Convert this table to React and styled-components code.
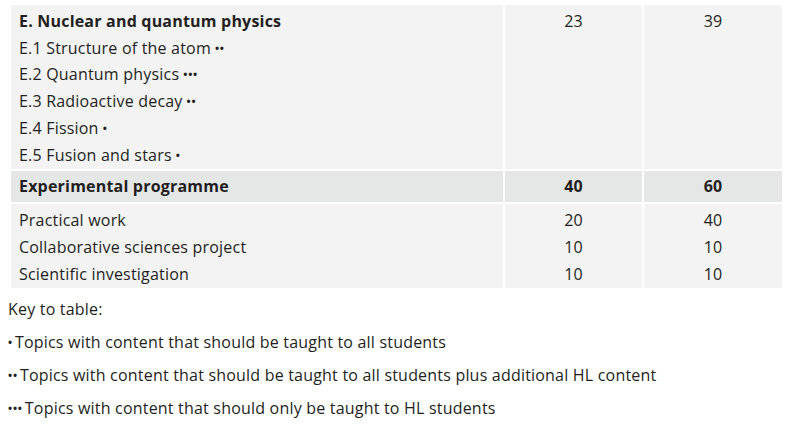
import React from "react";
import styled, { createGlobalStyle } from "styled-components";

const GlobalStyle = createGlobalStyle`
  body {
    margin: 0;
    background: #ffffff;
    color: #231f20;
    font-family: "Open Sans", "Liberation Sans", sans-serif;
    font-size: 16px;
    letter-spacing: 0.2px;
  }
`;

const Page = styled.div`
  padding-top: 5px;
`;

const Table = styled.div`
  margin-left: 11px;
  width: 771px;
  display: grid;
  grid-template-columns: 492px 137px 138px;
  gap: 2px;
`;

const Cell = styled.div`
  background: ${(p) => (p.$head ? "#e5e6e6" : "#f3f3f3")};
  padding: ${(p) => (p.$head ? "0" : "3px 0 1px")};
  padding-left: ${(p) => (p.$num ? "0" : "8px")};
  line-height: ${(p) => (p.$head ? "31px" : "26.7px")};
  font-weight: ${(p) => (p.$head ? 700 : 400)};
  text-align: ${(p) => (p.$num ? "center" : "left")};
`;

const Line = styled.div`
  font-weight: ${(p) => (p.$bold ? 700 : "inherit")};
  white-space: nowrap;
`;

const Dots = styled.span`
  display: inline-block;
  font-size: 11px;
  font-weight: 700;
  line-height: 1;
  letter-spacing: 0.8px;
  margin: ${(p) => (p.$lead ? "0 2px 0 0" : "0 0 0 4px")};
  vertical-align: 2px;
`;

const Key = styled.div`
  padding: 5px 0 0 8px;
  line-height: 33px;
`;

const KeyLine = styled.div`
  white-space: nowrap;
`;

const topics = [
  { label: "E.1 Structure of the atom", dots: 2 },
  { label: "E.2 Quantum physics", dots: 3 },
  { label: "E.3 Radioactive decay", dots: 2 },
  { label: "E.4 Fission", dots: 1 },
  { label: "E.5 Fusion and stars", dots: 1 },
];

const practical = [
  { label: "Practical work", sl: 20, hl: 40 },
  { label: "Collaborative sciences project", sl: 10, hl: 10 },
  { label: "Scientific investigation", sl: 10, hl: 10 },
];

const keys = [
  { dots: 1, text: "Topics with content that should be taught to all students" },
  { dots: 2, text: "Topics with content that should be taught to all students plus additional HL content" },
  { dots: 3, text: "Topics with content that should only be taught to HL students" },
];

const bullets = (n) => "•".repeat(n);

export default function App() {
  return (
    <>
      <GlobalStyle />
      <Page>
        <Table>
          <Cell>
            <Line $bold>E. Nuclear and quantum physics</Line>
            {topics.map((t) => (
              <Line key={t.label}>
                {t.label}
                <Dots>{bullets(t.dots)}</Dots>
              </Line>
            ))}
          </Cell>
          <Cell $num>23</Cell>
          <Cell $num>39</Cell>

          <Cell $head>Experimental programme</Cell>
          <Cell $head $num>40</Cell>
          <Cell $head $num>60</Cell>

          <Cell>
            {practical.map((r) => (
              <Line key={r.label}>{r.label}</Line>
            ))}
          </Cell>
          <Cell $num>
            {practical.map((r) => (
              <Line key={r.label}>{r.sl}</Line>
            ))}
          </Cell>
          <Cell $num>
            {practical.map((r) => (
              <Line key={r.label}>{r.hl}</Line>
            ))}
          </Cell>
        </Table>
        <Key>
          <KeyLine>Key to table:</KeyLine>
          {keys.map((k) => (
            <KeyLine key={k.dots}>
              <Dots $lead>{bullets(k.dots)}</Dots>
              {k.text}
            </KeyLine>
          ))}
          <KeyLine>All topics in the table are taught to both SL and HL students.</KeyLine>
        </Key>
      </Page>
    </>
  );
}
